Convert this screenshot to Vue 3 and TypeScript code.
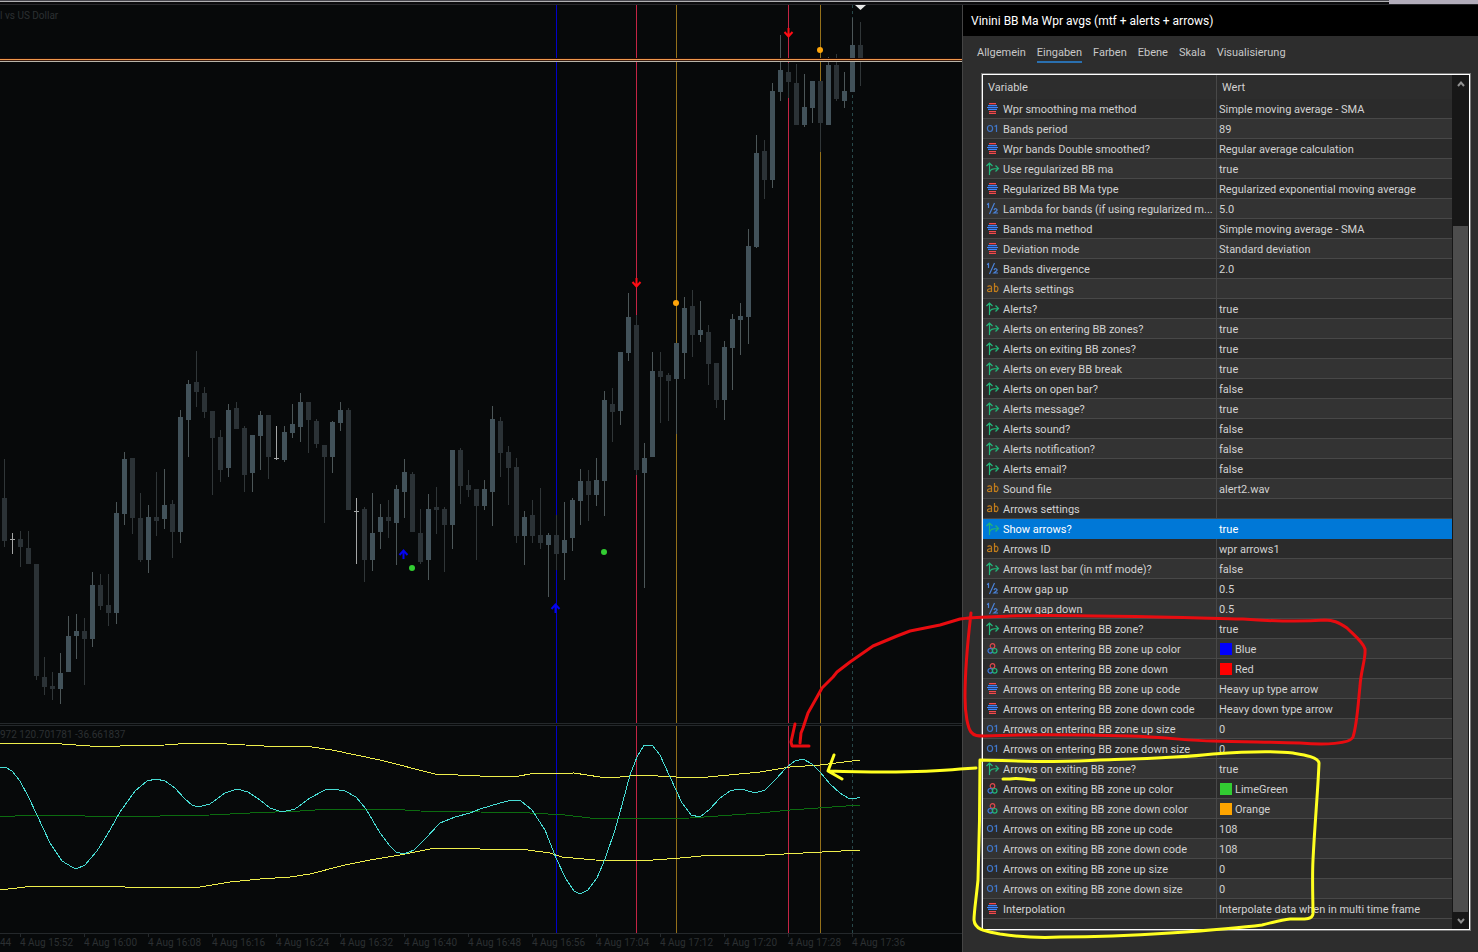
<script setup lang="ts">
import { ref } from 'vue'

type Kind = 'enum' | 'int' | 'bool' | 'double' | 'text' | 'color'
interface Row { kind: Kind; name: string; value: string; swatch?: string }

const tabs = ['Allgemein', 'Eingaben', 'Farben', 'Ebene', 'Skala', 'Visualisierung']
const activeTab = ref('Eingaben')
const selected = ref('Show arrows?')

const row = (kind: Kind, name: string, value: string, swatch?: string): Row => ({ kind, name, value, swatch })

const rows: Row[] = [
  row('enum', 'Wpr smoothing ma method', 'Simple moving average - SMA'),
  row('int', 'Bands period', '89'),
  row('enum', 'Wpr bands Double smoothed?', 'Regular average calculation'),
  row('bool', 'Use regularized BB ma', 'true'),
  row('enum', 'Regularized BB Ma type', 'Regularized exponential moving average'),
  row('double', 'Lambda for bands (if using regularized m...', '5.0'),
  row('enum', 'Bands ma method', 'Simple moving average - SMA'),
  row('enum', 'Deviation mode', 'Standard deviation'),
  row('double', 'Bands divergence', '2.0'),
  row('text', 'Alerts settings', ''),
  row('bool', 'Alerts?', 'true'),
  row('bool', 'Alerts on entering BB zones?', 'true'),
  row('bool', 'Alerts on exiting BB zones?', 'true'),
  row('bool', 'Alerts on every BB break', 'true'),
  row('bool', 'Alerts on open bar?', 'false'),
  row('bool', 'Alerts message?', 'true'),
  row('bool', 'Alerts sound?', 'false'),
  row('bool', 'Alerts notification?', 'false'),
  row('bool', 'Alerts email?', 'false'),
  row('text', 'Sound file', 'alert2.wav'),
  row('text', 'Arrows settings', ''),
  row('bool', 'Show arrows?', 'true'),
  row('text', 'Arrows ID', 'wpr arrows1'),
  row('bool', 'Arrows last bar (in mtf mode)?', 'false'),
  row('double', 'Arrow gap up', '0.5'),
  row('double', 'Arrow gap down', '0.5'),
  row('bool', 'Arrows on entering BB zone?', 'true'),
  row('color', 'Arrows on entering BB zone up color', 'Blue', '#0000ff'),
  row('color', 'Arrows on entering BB zone down', 'Red', '#ff0000'),
  row('enum', 'Arrows on entering BB zone up code', 'Heavy up type arrow'),
  row('enum', 'Arrows on entering BB zone down code', 'Heavy down type arrow'),
  row('int', 'Arrows on entering BB zone up size', '0'),
  row('int', 'Arrows on entering BB zone down size', '0'),
  row('bool', 'Arrows on exiting BB zone?', 'true'),
  row('color', 'Arrows on exiting BB zone up color', 'LimeGreen', '#32cd32'),
  row('color', 'Arrows on exiting BB zone down color', 'Orange', '#ffa500'),
  row('int', 'Arrows on exiting BB zone up code', '108'),
  row('int', 'Arrows on exiting BB zone down code', '108'),
  row('int', 'Arrows on exiting BB zone up size', '0'),
  row('int', 'Arrows on exiting BB zone down size', '0'),
  row('enum', 'Interpolation', 'Interpolate data when in multi time frame'),
]

/* high, body top, body bottom, low, type: u = rising, d = falling, j = doji */
type Candle = [number, number, number, number, 'u' | 'd' | 'j']
const candles: Candle[] = [
  [459, 498, 541, 547, 'd'], [533, 539, 540, 554, 'j'], [531, 539, 547, 567, 'd'], [531, 548, 564, 564, 'd'],
  [564, 564, 676, 680, 'd'], [657, 677, 687, 695, 'd'], [672, 686, 689, 700, 'd'], [653, 673, 689, 704, 'u'],
  [616, 636, 672, 672, 'u'], [614, 631, 636, 659, 'u'], [618, 631, 639, 685, 'd'], [572, 585, 639, 647, 'u'],
  [574, 585, 606, 610, 'd'], [574, 605, 613, 626, 'd'], [502, 513, 613, 624, 'u'], [452, 459, 514, 525, 'u'],
  [458, 458, 518, 534, 'd'], [493, 518, 560, 562, 'd'], [505, 517, 560, 573, 'u'], [472, 517, 521, 536, 'd'],
  [469, 505, 519, 529, 'u'], [500, 504, 532, 558, 'd'], [410, 417, 532, 543, 'u'], [380, 384, 420, 457, 'u'],
  [351, 382, 392, 407, 'd'], [387, 393, 412, 418, 'd'], [411, 411, 438, 495, 'd'], [430, 437, 470, 482, 'd'],
  [404, 410, 468, 477, 'u'], [402, 408, 429, 429, 'd'], [426, 428, 475, 492, 'd'], [435, 435, 473, 492, 'u'],
  [411, 415, 436, 470, 'u'], [415, 415, 457, 479, 'd'], [426, 458, 459, 460, 'j'], [426, 432, 460, 462, 'u'],
  [404, 424, 433, 438, 'u'], [393, 402, 427, 442, 'u'], [402, 402, 420, 453, 'd'], [419, 421, 444, 448, 'd'],
  [445, 445, 457, 523, 'd'], [421, 422, 457, 473, 'u'], [402, 410, 423, 431, 'u'], [408, 410, 510, 510, 'd'],
  [498, 511, 512, 564, 'j'], [507, 509, 560, 582, 'd'], [493, 533, 560, 571, 'u'], [504, 517, 532, 549, 'u'],
  [500, 517, 521, 538, 'd'], [485, 489, 523, 565, 'u'], [459, 472, 492, 518, 'u'], [472, 474, 532, 532, 'd'],
  [509, 533, 562, 564, 'd'], [494, 509, 560, 580, 'u'], [487, 507, 510, 534, 'd'], [507, 509, 525, 572, 'd'],
  [450, 450, 525, 549, 'u'], [448, 450, 486, 504, 'd'], [470, 485, 490, 497, 'd'], [489, 489, 506, 560, 'd'],
  [480, 489, 506, 510, 'u'], [406, 419, 492, 526, 'u'], [417, 421, 453, 477, 'd'], [446, 452, 468, 505, 'd'],
  [458, 467, 536, 543, 'd'], [511, 517, 536, 565, 'u'], [500, 515, 536, 543, 'd'], [488, 535, 543, 549, 'd'],
  [533, 535, 545, 597, 'u'], [515, 535, 554, 570, 'd'], [502, 540, 553, 580, 'u'], [498, 500, 538, 551, 'u'],
  [469, 481, 501, 525, 'u'], [470, 481, 495, 521, 'd'], [458, 480, 495, 506, 'u'], [391, 400, 481, 516, 'u'],
  [388, 404, 412, 442, 'd'], [352, 352, 411, 425, 'u'], [293, 317, 353, 361, 'u'], [315, 325, 470, 475, 'd'],
  [443, 458, 473, 588, 'u'], [352, 371, 457, 457, 'u'], [352, 371, 377, 423, 'd'], [373, 375, 381, 421, 'd'],
  [343, 343, 379, 434, 'u'], [297, 308, 353, 379, 'u'], [290, 306, 335, 357, 'd'], [301, 330, 335, 342, 'u'],
  [325, 332, 364, 385, 'd'], [363, 363, 400, 408, 'd'], [341, 347, 400, 420, 'u'], [314, 319, 348, 390, 'u'],
  [303, 316, 320, 355, 'u'], [229, 246, 317, 344, 'u'], [135, 153, 247, 248, 'u'], [140, 151, 180, 199, 'd'],
  [83, 91, 180, 188, 'u'], [35, 70, 92, 101, 'u'], [63, 72, 82, 98, 'd'], [64, 83, 125, 125, 'd'],
  [74, 107, 125, 127, 'u'], [81, 81, 108, 123, 'u'], [81, 81, 123, 152, 'd'], [57, 65, 125, 125, 'u'],
  [54, 65, 99, 101, 'd'], [72, 91, 101, 108, 'u'], [18, 45, 92, 92, 'u'], [22, 45, 62, 86, 'd'],
]

const signals = [
  { x: 556, color: '#0000c8' },
  { x: 636, color: '#c42444' },
  { x: 676, color: '#94701a' },
  { x: 788, color: '#c42444' },
  { x: 820, color: '#94701a' },
]

const times = ['15:52', '16:00', '16:08', '16:16', '16:24', '16:32', '16:40', '16:48', '16:56', '17:04', '17:12', '17:20', '17:28', '17:36']

const upperBand = '0,744 16,743 48,743 90,746 120,746 165,745 192,743 208,743 264,746 305,746 332,750 380,760 435,774 480,776 519,776 530,774 574,773 600,777 620,777 640,775 676,777 708,777 760,772 790,767 820,765 860,760'
const lowerBand = '0,890 25,887 45,886 120,886 125,887 160,887 200,887 230,882 260,879 290,877 310,874 345,865 370,860 400,855 435,848 457,848 480,849 520,849 550,853 562,857 595,860 640,861 680,858 712,855 765,855 860,850'
const middle = '0,817 30,815 80,815 85,816 160,816 210,815 250,813 300,811 330,809 390,809 420,811 480,812 530,813 565,815 590,818 615,819 690,818 760,813 790,810 860,805'
const oscillator = '0,767 5,767 12,771 20,781 28,796 37,815 50,843 62,861 72,867 76,869 85,865 97,851 110,830 120,812 135,791 147,781 156,779 165,781 175,788 185,799 192,805 198,807 210,804 225,793 237,789 248,792 260,800 270,808 282,812 295,809 310,798 325,790 333,789 345,791 356,797 366,809 380,833 390,846 396,852 404,854 414,850 425,839 440,823 455,817 470,813 480,809 500,803 512,800 521,801 532,810 545,830 556,858 566,879 574,891 580,894 588,890 597,878 605,859 615,830 622,805 630,775 637,757 644,745 652,745 660,755 670,777 682,803 691,815 700,817 710,809 720,798 730,791 738,789 745,790 755,793 765,790 775,780 787,767 795,761 803,759 812,764 820,772 830,784 840,793 848,798 854,799 860,797'
</script>

<template>
  <div class="page">
    <div class="strip"><span class="strip-end"></span></div>
    <main class="work">
      <svg class="chart" viewBox="0 5 962 947" preserveAspectRatio="none" role="img" aria-label="Price chart">
        <g shape-rendering="crispEdges">
          <rect v-for="s in signals" :key="'m' + s.x" :x="s.x" y="5" width="1" height="718" :fill="s.color" />
          <rect v-for="s in signals" :key="'i' + s.x" :x="s.x" y="726" width="1" height="207" :fill="s.color" />
          <path class="dash" d="M852.5 5V723M852.5 726V933" />
          <path class="rule" d="M0 723.5H962M0 725.5H962M0 933.5H962" />
          <rect class="tick" v-for="(t, i) in times" :key="t" :x="20 + i * 64" y="934" width="1" height="3" />
          <g v-for="(c, i) in candles" :key="i" :class="c[4]">
            <rect class="wick" :x="4 + i * 8" :y="c[0]" width="1" :height="c[3] - c[0]" />
            <rect class="body" :x="2 + i * 8" :y="c[1]" width="5" :height="c[2] - c[1]" />
          </g>
          <rect x="0" y="58" width="962" height="1" fill="#200a04" />
          <rect x="0" y="59" width="962" height="1" fill="#f0984c" />
          <rect x="0" y="60" width="962" height="1" fill="#3a1c10" />
          <rect x="0" y="61" width="962" height="1" fill="#b8b4a8" />
          <polyline class="line" :points="middle" stroke="#0c6c10" />
          <polyline class="line" :points="upperBand" stroke="#eeee4c" />
          <polyline class="line" :points="lowerBand" stroke="#eeee4c" />
          <polyline class="line" :points="oscillator" stroke="#48dcd4" />
        </g>
        <path d="M855 5H866L860.500 10Z" fill="#e8e8e8" />
        <g fill="none" stroke="#ff0c14" stroke-width="2">
          <path d="M788.500 28V37M784.500 32L788.500 36.500L792.500 32" />
          <path d="M636.500 278V287M632.500 282L636.500 286.500L640.500 282" />
        </g>
        <g fill="none" stroke="#0404f0" stroke-width="2">
          <path d="M403.500 559V550M399.500 555L403.500 550.500L407.500 555" />
          <path d="M555.500 613V604M551.500 609L555.500 604.500L559.500 609" />
        </g>
        <g fill="#32cd32"><circle cx="412" cy="568" r="3" /><circle cx="604" cy="552" r="3" /></g>
        <g fill="#ffa50a"><circle cx="820" cy="50" r="3" /><circle cx="676" cy="303" r="3" /></g>
        <g class="labels">
          <text x="0" y="19">l vs US Dollar</text>
          <text x="0" y="738">972 120.701781 -36.661837</text>
          <text x="0" y="946">44</text>
          <text v-for="(t, i) in times" :key="t" :x="20 + i * 64" y="946">4 Aug {{ t }}</text>
        </g>
      </svg>

      <section class="dialog" aria-label="Indicator properties">
        <h1 class="title">Vinini BB Ma Wpr avgs (mtf + alerts + arrows)</h1>
        <nav class="tabs">
          <button v-for="t in tabs" :key="t" type="button" :class="{ active: t === activeTab }" @click="activeTab = t">{{ t }}</button>
        </nav>
        <div class="list">
          <table class="grid">
            <colgroup><col class="c-name" /><col /></colgroup>
            <thead><tr><th>Variable</th><th>Wert</th></tr></thead>
            <tbody>
              <tr v-for="r in rows" :key="r.name" :class="{ selected: r.name === selected }" @click="selected = r.name">
                <td>
                  <div class="cell">
                    <svg class="icon" viewBox="0 0 14 14" width="14" height="14" aria-hidden="true">
                      <g v-if="r.kind === 'enum'">
                        <path d="M3 1H10V3H3ZM3 9H10V12H3Z" fill="#6c2c30" />
                        <path d="M2 3H11V8H2Z" fill="#243f7c" />
                        <path d="M3 1H10V2H3ZM3 9H10V10H3ZM3 11H10V12H3Z" fill="#f04a4c" />
                        <path d="M2 3H11V4H2ZM1 5H12V6H1ZM2 7H11V8H2Z" fill="#3f84f4" />
                      </g>
                      <g v-else-if="r.kind === 'int'" fill="none" stroke="#4076c8" stroke-width="1.200">
                        <ellipse cx="4" cy="6.500" rx="2.600" ry="3" /><path d="M8.500 4.500L10.500 3.500V10" />
                      </g>
                      <g v-else-if="r.kind === 'bool'" fill="none" stroke="#22b478" stroke-width="1.200">
                        <path d="M3.500 13V1.500M0.500 4L3.500 1L6.500 4M3.500 10.500C4 7.500 6 6.500 12.500 6.500M9.500 3.500L12.500 6.500L9.500 9.500" />
                      </g>
                      <g v-else-if="r.kind === 'double'" fill="none" stroke="#4a82d8" stroke-width="1.200">
                        <path d="M1 2.500L2.500 1.500V6M3.500 12L8.500 1M8 8C8.500 6 11.500 6.500 11 8.500L8 11H12" />
                      </g>
                      <g v-else-if="r.kind === 'text'" fill="none" stroke="#c07c1c" stroke-width="1.200">
                        <path d="M1.500 4.500C3 3.500 5.500 3.500 5.500 5.500V10M5.500 6.500C3 6.500 1.500 7 1.500 8.500S4.500 10 5.500 8.500" />
                        <path d="M8.500 1V10M8.500 6C9 3.500 12 3.500 12 6.800S9 10.500 8.500 8" />
                      </g>
                      <g v-else fill="none" stroke-width="1.200">
                        <circle cx="6.500" cy="4" r="2.300" stroke="#e0484c" />
                        <circle cx="4.300" cy="8.800" r="2.300" stroke="#3f7ce0" />
                        <circle cx="8.700" cy="8.800" r="2.300" stroke="#22b478" />
                      </g>
                    </svg>
                    <span>{{ r.name }}</span>
                  </div>
                </td>
                <td>
                  <div class="cell value">
                    <span v-if="r.swatch" class="swatch" :style="{ background: r.swatch }"></span>
                    <span>{{ r.value }}</span>
                  </div>
                </td>
              </tr>
            </tbody>
          </table>
          <div class="scroll">
            <button type="button" aria-label="Scroll up"><svg viewBox="0 0 8 8" width="8" height="8"><path d="M1 6L4 2.500L7 6" /></svg></button>
            <div class="track"><div class="thumb"></div></div>
            <button type="button" aria-label="Scroll down"><svg viewBox="0 0 8 8" width="8" height="8"><path d="M1 2L4 5.500L7 2" /></svg></button>
          </div>
        </div>
      </section>
    </main>

    <svg class="marks" viewBox="0 0 1478 952" preserveAspectRatio="none" aria-hidden="true">
      <g class="pen red">
        <path d="M971 613C969 630 965 670 965 697C965 715 968 728 971 732C974 736 978 736 984 736C1030 734 1090 735 1130 736C1165 737 1190 741 1213 741C1245 742 1270 742 1300 743C1325 745 1350 744 1353 737C1357 725 1358 705 1360 686C1361 670 1366 658 1365 649C1363 642 1354 635 1347 628C1338 622 1333 620 1325 620C1300 622 1270 621 1243 619C1160 617 1060 614 1010 616C990 617 972 617 960 619L940 625L910 631L897 636L873 646L850 662L837 672L833 677L822 688L817 697L808 713L803 728L801 733L800 743" />
        <path d="M795 724L791 742L792 746H809" />
      </g>
      <g class="pen yellow">
        <path d="M980 760C980 800 979 850 978 880C976 900 974 912 974 920C975 930 985 931 1000 934C1020 937 1040 938 1060 937C1100 937 1140 935 1170 933C1200 931 1240 928 1262 925C1275 922 1280 920 1290 919C1305 919 1312 920 1313 914C1313 900 1312 880 1313 860C1315 820 1318 790 1319 763C1318 757 1305 755 1293 753C1275 751 1240 752 1213 754C1180 758 1130 759 1100 760C1060 763 1030 761 980 760" />
        <path d="M1003 779L1010 779C1018 777 1025 780 1034 780" />
        <path d="M976 768L960 769C930 772 890 773 828 771M834 755L828 771L842 779" />
      </g>
    </svg>
  </div>
</template>

<style>
body {
  margin: 0;
  background: #07090a;
}
</style>

<style scoped>
.page {
  position: relative;
  display: flex;
  flex-direction: column;
  min-height: 100vh;
  background: #07090a;
  color: #d2d2d2;
  font-family: Roboto, "Noto Sans", sans-serif;
  font-size: 11px;
}
.strip {
  display: flex;
  justify-content: flex-end;
  box-sizing: border-box;
  height: 5px;
  border-bottom: 1px solid #26262a;
  background: linear-gradient(#47464d 0 1px, #b0b0b2 1px 2px, #0b0b0d 2px);
}
.strip-end {
  width: 6%;
  height: 4px;
  background: #b2acba;
}
.work {
  flex: 1;
  display: grid;
  grid-template-columns: minmax(0, 962fr) minmax(0, 516fr);
}
.chart {
  display: block;
  width: 100%;
  height: 100%;
}
.dash { fill: none; stroke: #28484a; stroke-dasharray: 3 3; }
.rule { fill: none; stroke: #24282b; }
.tick { fill: #24282b; }
.line { fill: none; stroke-width: 1; }
.u .body { fill: #42525a; }
.u .wick { fill: #4c5658; }
.d .body { fill: #2b3236; }
.d .wick { fill: #303638; }
.j rect { fill: #a4a6a6; }
.labels { fill: #2c3032; font-size: 10px; }

.dialog {
  display: flex;
  flex-direction: column;
  border-left: 1px solid #444;
  background: #2d2d2d;
}
.title {
  margin: 0;
  padding: 1px 0 0 8px;
  background: #000;
  color: #fff;
  font-size: 12px;
  font-weight: 400;
  line-height: 30px;
}
.tabs {
  display: flex;
  align-items: flex-start;
  gap: 11px;
  box-sizing: border-box;
  height: 37px;
  padding: 8px 0 0 14px;
}
.tabs button {
  padding: 0;
  border: 0;
  border-bottom: 2px solid transparent;
  background: none;
  color: #c8c8c8;
  font: inherit;
  line-height: 17px;
}
.tabs .active { border-bottom-color: #2a70b0; }
.list {
  flex: 1;
  display: flex;
  margin: 0 7px 21px 18px;
  border: 1px solid #777;
  outline: 1px solid #fff;
  outline-offset: -2px;
  padding: 1px;
}
.grid {
  flex: 1;
  align-self: flex-start;
  width: 100%;
  table-layout: fixed;
  border-collapse: separate;
  border-spacing: 0;
  min-width: 0;
}
.c-name { width: 234px; }
th {
  height: 24px;
  padding: 0 5px;
  font-weight: 400;
  text-align: left;
}
td {
  height: 19px;
  padding: 0;
  border-bottom: 1px solid #484848;
}
th:first-child, td:first-child { border-right: 1px solid #484848; }
tbody tr:nth-child(even) { background: #333; }
tbody tr:nth-child(odd) { background: #2b2b2b; }
tbody tr.selected { background: #0078d7; color: #fff; }
.selected td { border-color: #0078d7; }
.cell {
  display: flex;
  align-items: flex-start;
  gap: 3px;
  box-sizing: border-box;
  height: 19px;
  padding: 1px 0 0 3px;
  line-height: 20px;
  white-space: nowrap;
  overflow: hidden;
}
.value { padding-left: 2px; }
.icon {
  flex: none;
  margin-top: 2px;
}
.swatch {
  width: 12px;
  height: 12px;
  margin: 3px 0 0 1px;
}
.scroll {
  display: flex;
  flex-direction: column;
  flex: none;
  width: 17px;
  background: #171717;
}
.scroll button {
  display: flex;
  align-items: center;
  justify-content: center;
  height: 17px;
  padding: 0;
  border: 0;
  background: none;
}
.scroll path { fill: none; stroke: #909090; stroke-width: 2; }
.track {
  flex: 1;
  display: flex;
  flex-direction: column;
}
.track::before {
  content: "";
  flex: 134;
}
.thumb {
  flex: 686;
  margin: 0 1px;
  background: #4d4d4d;
}
.marks {
  position: absolute;
  inset: 0;
  width: 100%;
  height: 100%;
  pointer-events: none;
}
.pen {
  fill: none;
  stroke-width: 3;
  stroke-linecap: round;
  stroke-linejoin: round;
}
.red { stroke: #e80c10; }
.yellow { stroke: #ffff20; }
</style>
